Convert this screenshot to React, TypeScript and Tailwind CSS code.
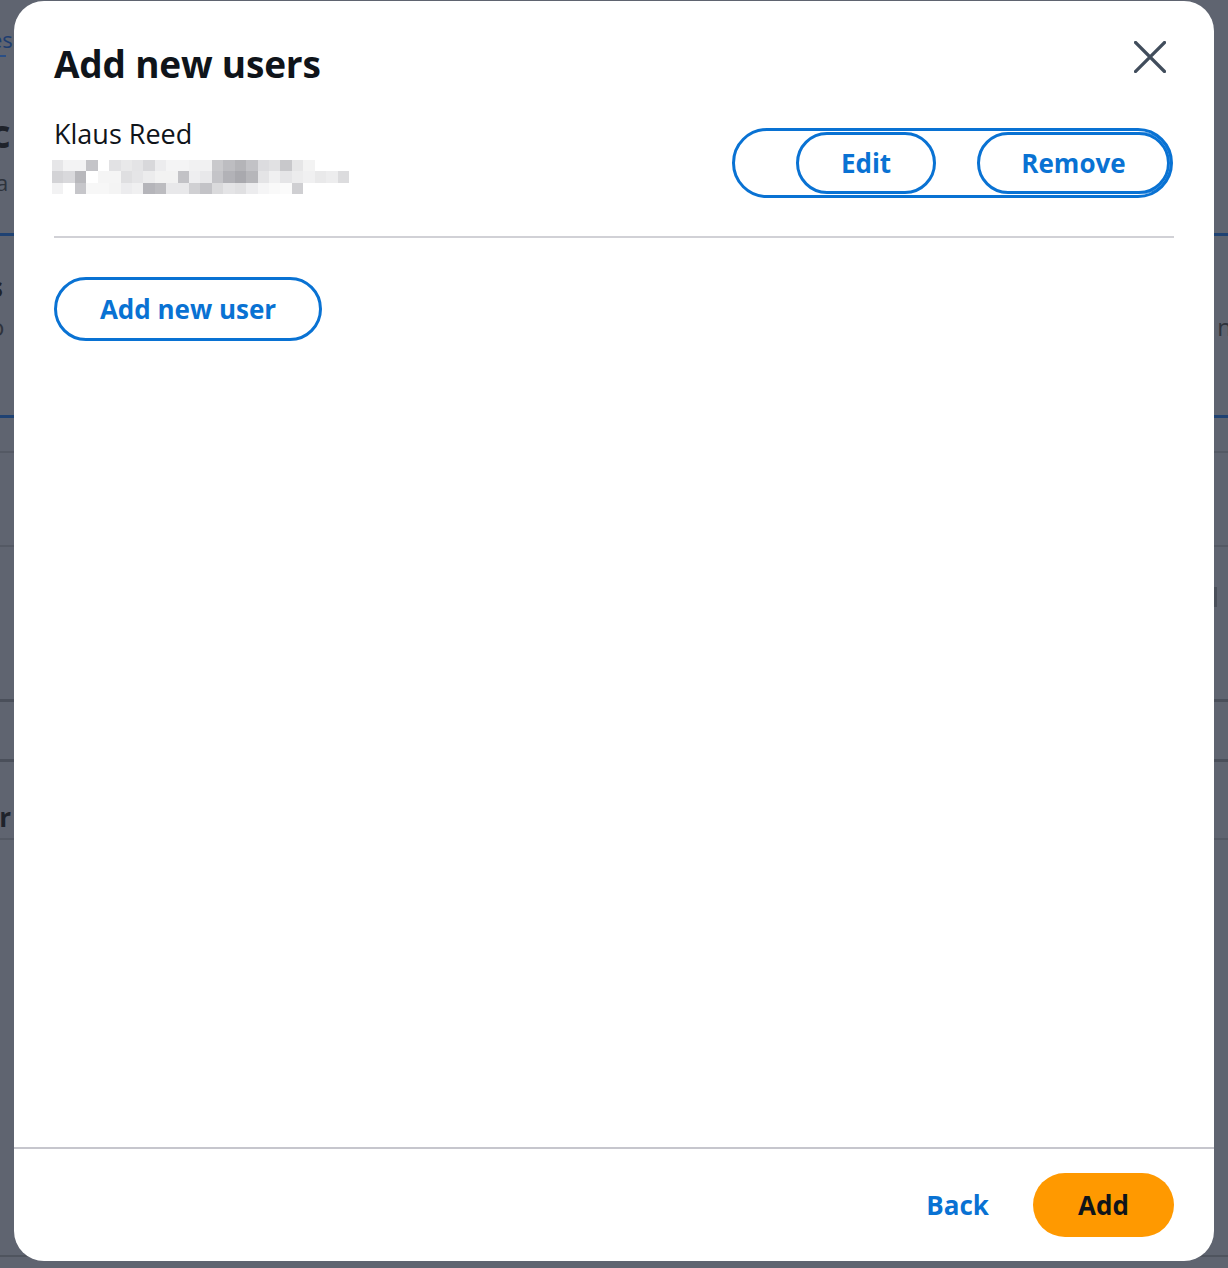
// blurred e-mail placeholder: three rows of grey blocks
const blur: string[][] = [
  ["#e6e6e8", "#f3f3f4", "#f3f3f4", "#c4c4c8", "#ffffff", "#e2e2e4", "#e9e9ea", "#e4e4e6", "#d8d8db", "#ececee", "#f4f4f5", "#f4f4f5", "#f1f1f2", "#f1f1f2", "#c9c9cc", "#bdbdc1", "#b4b4b8", "#c2c2c6", "#dcdcdf", "#e1e1e3", "#c8c8cb", "#e6e6e7", "#f3f3f3", "#ffffff", "#ffffff", "#ffffff"],
  ["#d3d3d6", "#d9d9dc", "#b8b8bc", "#ffffff", "#f5f5f5", "#f5f5f5", "#dfdfe1", "#e5e5e7", "#ececed", "#f2f2f2", "#f2f2f2", "#c2c2c6", "#eeeef0", "#e8e8ea", "#c4c4c8", "#b2b2b7", "#a9a9ae", "#b6b6ba", "#e4e4e6", "#f0f0f1", "#e5e5e7", "#ececed", "#f0f0f1", "#e9e9ea", "#ededee", "#dcdcde"],
  ["#f2f2f3", "#ffffff", "#c6c6ca", "#f7f7f7", "#f7f7f7", "#f4f4f4", "#ececee", "#f0f0f1", "#b5b5ba", "#bcbcc0", "#e8e8ea", "#e8e8ea", "#d0d0d3", "#c3c3c7", "#dadadc", "#e4e4e6", "#e0e0e2", "#ececee", "#f5f5f6", "#f9f9f9", "#fbfbfb", "#cfcfd2", "#ffffff", "#ffffff", "#ffffff", "#ffffff"],
];

function BlurredEmail() {
  return (
    <div className="flex flex-col w-[297px]">
      {blur.map((row, i) => (
        <div key={i} className={i === 1 ? "flex h-[12px]" : "flex h-[11px]"}>
          {row.map((c, j) => (
            <div key={j} className="flex-1" style={{ backgroundColor: c }} />
          ))}
        </div>
      ))}
    </div>
  );
}

function CloseIcon() {
  return (
    <svg width="32" height="32" viewBox="0 0 32 32" fill="none">
      <path d="M1.5 1.5 L30.5 30.5 M30.5 1.5 L1.5 30.5" stroke="#414d5c" strokeWidth="3.2" strokeLinecap="square" />
    </svg>
  );
}

function BackgroundPage() {
  // only the edges of this page show around the modal
  return (
    <div className="w-[1228px] h-[1268px] bg-[#5f6470] flex flex-col overflow-hidden font-['Open_Sans',sans-serif]">
      <div className="h-[22px]" />
      <div className="h-[35px] border-b-2 border-[#2a4f86] w-[16px] text-[22px] leading-[35px] text-[#1d3d70] -ml-[10px]">
        es
      </div>
      <div className="h-[56px]" />
      <div className="text-[40px] font-bold leading-[40px] text-[#1f232b] -ml-[10px]">c</div>
      <div className="h-[16px]" />
      <div className="text-[22px] leading-[26px] text-[#2e333c] -ml-[4px]">a</div>
      <div className="h-[38px]" />
      <div className="h-[3px] bg-[#1f4273]" />
      <div className="h-[36px]" />
      <div className="text-[26px] font-bold leading-[30px] text-[#1f232b] -ml-[10px] flex justify-between">
        <span>s</span>
      </div>
      <div className="h-[11px]" />
      <div className="flex justify-between text-[24px] leading-[28px] text-[#2e333c]">
        <span className="-ml-[10px]">o</span>
        <span className="mr-[-4px]">n</span>
      </div>
      <div className="h-[74px]" />
      <div className="h-[3px] bg-[#1f4273]" />
      <div className="h-[33px]" />
      <div className="h-[2px] bg-[#545964]" />
      <div className="h-[92px]" />
      <div className="h-[2px] bg-[#545964]" />
      <div className="h-[40px]" />
      <div className="flex justify-end h-[20px]">
        <div className="w-[3px] bg-[#4a4f5a] mr-[11px]" />
      </div>
      <div className="h-[92px]" />
      <div className="h-[3px] bg-[#4a4f5a]" />
      <div className="h-[57px]" />
      <div className="h-[3px] bg-[#4a4f5a]" />
      <div className="h-[40px]" />
      <div className="text-[26px] font-bold leading-[30px] text-[#1f232b] -ml-[16px]">er</div>
      <div className="h-[6px]" />
      <div className="h-[2px] bg-[#545964]" />
      <div className="flex-1" />
      <div className="h-[2px] bg-[#4f545e] mb-[11px]" />
    </div>
  );
}

export default function App() {
  return (
    <div className="relative w-[1228px] h-[1268px] overflow-hidden">
      <BackgroundPage />

      {/* modal */}
      <div className="absolute left-[14px] top-[1px] w-[1200px] h-[1260px] bg-white rounded-[30px] flex flex-col font-['Open_Sans',sans-serif] text-[#0f141a]">
        <div className="flex-1 flex flex-col px-[40px]">
          <div className="flex items-start justify-between pt-[38px]">
            <h2 className="text-[37px] font-bold leading-[50px] tracking-[-0.2px]">Add new users</h2>
            <button className="mt-[2px] mr-[8px]">
              <CloseIcon />
            </button>
          </div>

          <div className="flex items-start justify-between mt-[27px] pb-[38px] border-b-2 border-[#d1d1d6]">
            <div className="flex flex-col">
              <div className="text-[27px] leading-[36px]">Klaus Reed</div>
              <div className="mt-[8px] ml-[-2px]">
                <BlurredEmail />
              </div>
            </div>
            <div className="flex items-center h-[70px] w-[441px] border-[3px] border-[#0972d3] rounded-full pl-[61px] mr-[1px] mt-[12px]">
              <button className="h-[62px] w-[140px] border-[3px] border-[#0972d3] rounded-full text-[26px] font-bold text-[#0972d3]">
                Edit
              </button>
              <button className="ml-[41px] h-[62px] w-[193px] border-[3px] border-[#0972d3] rounded-full text-[26px] font-bold text-[#0972d3] shadow-[2px_0_0_0_#0972d3]">
                Remove
              </button>
            </div>
          </div>

          <div className="pt-[39px]">
            <button className="h-[64px] w-[268px] border-[3px] border-[#0972d3] rounded-full text-[26px] font-bold text-[#0972d3]">
              Add new user
            </button>
          </div>
        </div>

        <div className="border-t-2 border-[#c6c6cd] flex items-center justify-end gap-[44px] px-[40px] pt-[24px] pb-[24px]">
          <button className="text-[26px] font-bold text-[#0972d3]">Back</button>
          <button className="h-[64px] w-[141px] bg-[#ff9900] rounded-full text-[26px] font-bold text-[#0f141a]">
            Add
          </button>
        </div>
      </div>
    </div>
  );
}
